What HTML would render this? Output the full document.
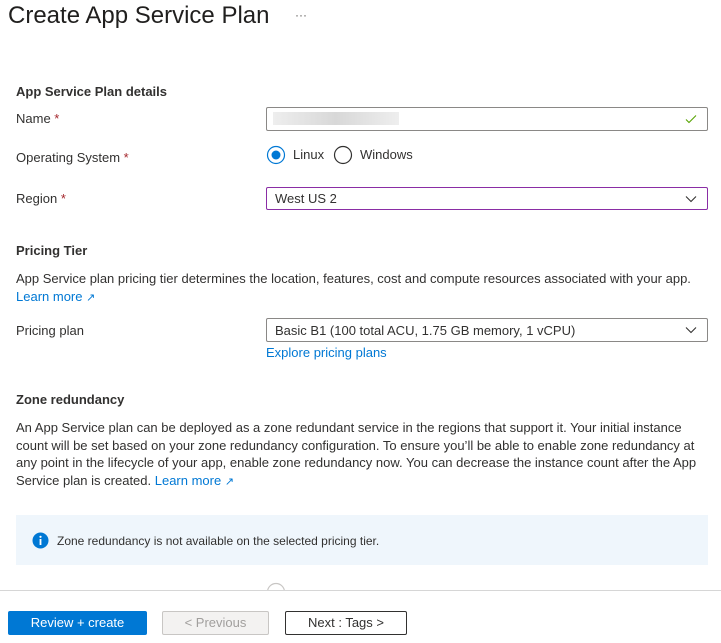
<!DOCTYPE html>
<html><head><meta charset="utf-8"><style>
*{margin:0;padding:0;box-sizing:border-box}
body{width:721px;height:643px;overflow:hidden;background:#fff;font-family:"Liberation Sans",sans-serif;font-size:13px;color:#323130;position:relative}
.a{position:absolute;white-space:nowrap}
.b{font-weight:bold}
.req{color:#a4262c}
.link{color:#0078d4}
.box{position:absolute;border:1px solid #8a8886;background:#fff;border-radius:2px}
.chev{position:absolute;right:10px;top:6px}
.btn{position:absolute;top:611px;height:24px;border-radius:2px;text-align:center;line-height:22px;font-size:13px}
</style></head><body>
<div class="a" style="left:8px;top:2px;font-size:24px;color:#201f1e">Create App Service Plan</div>
<div class="a" style="left:295px;top:8px;font-size:12px;color:#605e5c">···</div>

<div class="a b" style="left:16px;top:84px">App Service Plan details</div>
<div class="a" style="left:16px;top:111px">Name <span class="req">*</span></div>
<div class="box" style="left:266px;top:107px;width:442px;height:24px">
 <div style="position:absolute;left:6px;top:4px;width:126px;height:13px;background:linear-gradient(90deg,#eee,#d8d8d8,#eee)"></div>
 <svg class="chev" style="top:5px" width="12" height="12" viewBox="0 0 12 12"><path d="M1 6.5l3 3 7-7" fill="none" stroke="#57a300" stroke-width="1.1"/></svg>
</div>
<div class="a" style="left:16px;top:150px">Operating System <span class="req">*</span></div>
<svg class="a" style="left:266px;top:145px" width="20" height="20"><circle cx="10" cy="10" r="8.5" fill="none" stroke="#0078d4" stroke-width="1.2"/><circle cx="10" cy="10" r="4.5" fill="#0078d4"/></svg>
<div class="a" style="left:293px;top:147px">Linux</div>
<svg class="a" style="left:333px;top:145px" width="20" height="20"><circle cx="10" cy="10" r="8.5" fill="none" stroke="#323130" stroke-width="1.2"/></svg>
<div class="a" style="left:360px;top:147px">Windows</div>
<div class="a" style="left:16px;top:191px">Region <span class="req">*</span></div>
<div class="box" style="left:266px;top:187px;width:442px;height:23px;border-color:#8a2da5">
 <div class="a" style="left:8px;top:3px">West US 2</div>
 <svg class="chev" width="12" height="10" viewBox="0 0 12 10"><path d="M1 2.5l5 5 5-5" fill="none" stroke="#323130" stroke-width="1.1"/></svg>
</div>

<div class="a b" style="left:16px;top:243px">Pricing Tier</div>
<div class="a" style="left:16px;top:271px">App Service plan pricing tier determines the location, features, cost and compute resources associated with your app.</div>
<div class="a link" style="left:16px;top:289px">Learn more <span style="font-size:11px">↗</span></div>
<div class="a" style="left:16px;top:323px">Pricing plan</div>
<div class="box" style="left:266px;top:318px;width:442px;height:24px">
 <div class="a" style="left:8px;top:4px">Basic B1 (100 total ACU, 1.75 GB memory, 1 vCPU)</div>
 <svg class="chev" width="12" height="10" viewBox="0 0 12 10"><path d="M1 2.5l5 5 5-5" fill="none" stroke="#323130" stroke-width="1.1"/></svg>
</div>
<div class="a link" style="left:266px;top:345px">Explore pricing plans</div>

<div class="a b" style="left:16px;top:392px">Zone redundancy</div>
<div class="a" style="left:16px;top:419px;line-height:17.5px">An App Service plan can be deployed as a zone redundant service in the regions that support it. Your initial instance<br>count will be set based on your zone redundancy configuration. To ensure you’ll be able to enable zone redundancy at<br>any point in the lifecycle of your app, enable zone redundancy now. You can decrease the instance count after the App<br>Service plan is created. <span class="link">Learn more <span style="font-size:11px">↗</span></span></div>

<div style="position:absolute;left:16px;top:515px;width:692px;height:50px;background:#eff6fc"></div>
<svg class="a" style="left:32px;top:532px" width="17" height="17"><circle cx="8.5" cy="8.5" r="8" fill="#0078d4"/><rect x="7.6" y="7" width="1.8" height="6" fill="#fff"/><circle cx="8.5" cy="4.8" r="1.1" fill="#fff"/></svg>
<div class="a" style="left:57px;top:534px;font-size:12px">Zone redundancy is not available on the selected pricing tier.</div>

<svg class="a" style="left:266px;top:582px" width="20" height="10"><circle cx="10" cy="10" r="8.5" fill="none" stroke="#c8c6c4" stroke-width="1.2"/></svg>
<div style="position:absolute;left:0;top:590px;width:721px;height:53px;background:#fff;border-top:1px solid #d6d6d6"></div>

<div class="btn" style="left:8px;width:139px;background:#0078d4;color:#fff;line-height:24px">Review + create</div>
<div class="btn" style="left:162px;width:107px;background:#f3f2f1;border:1px solid #c8c6c4;color:#a19f9d">&lt; Previous</div>
<div class="btn" style="left:285px;width:122px;background:#fff;border:1px solid #323130;color:#323130">Next : Tags &gt;</div>
</body></html>
